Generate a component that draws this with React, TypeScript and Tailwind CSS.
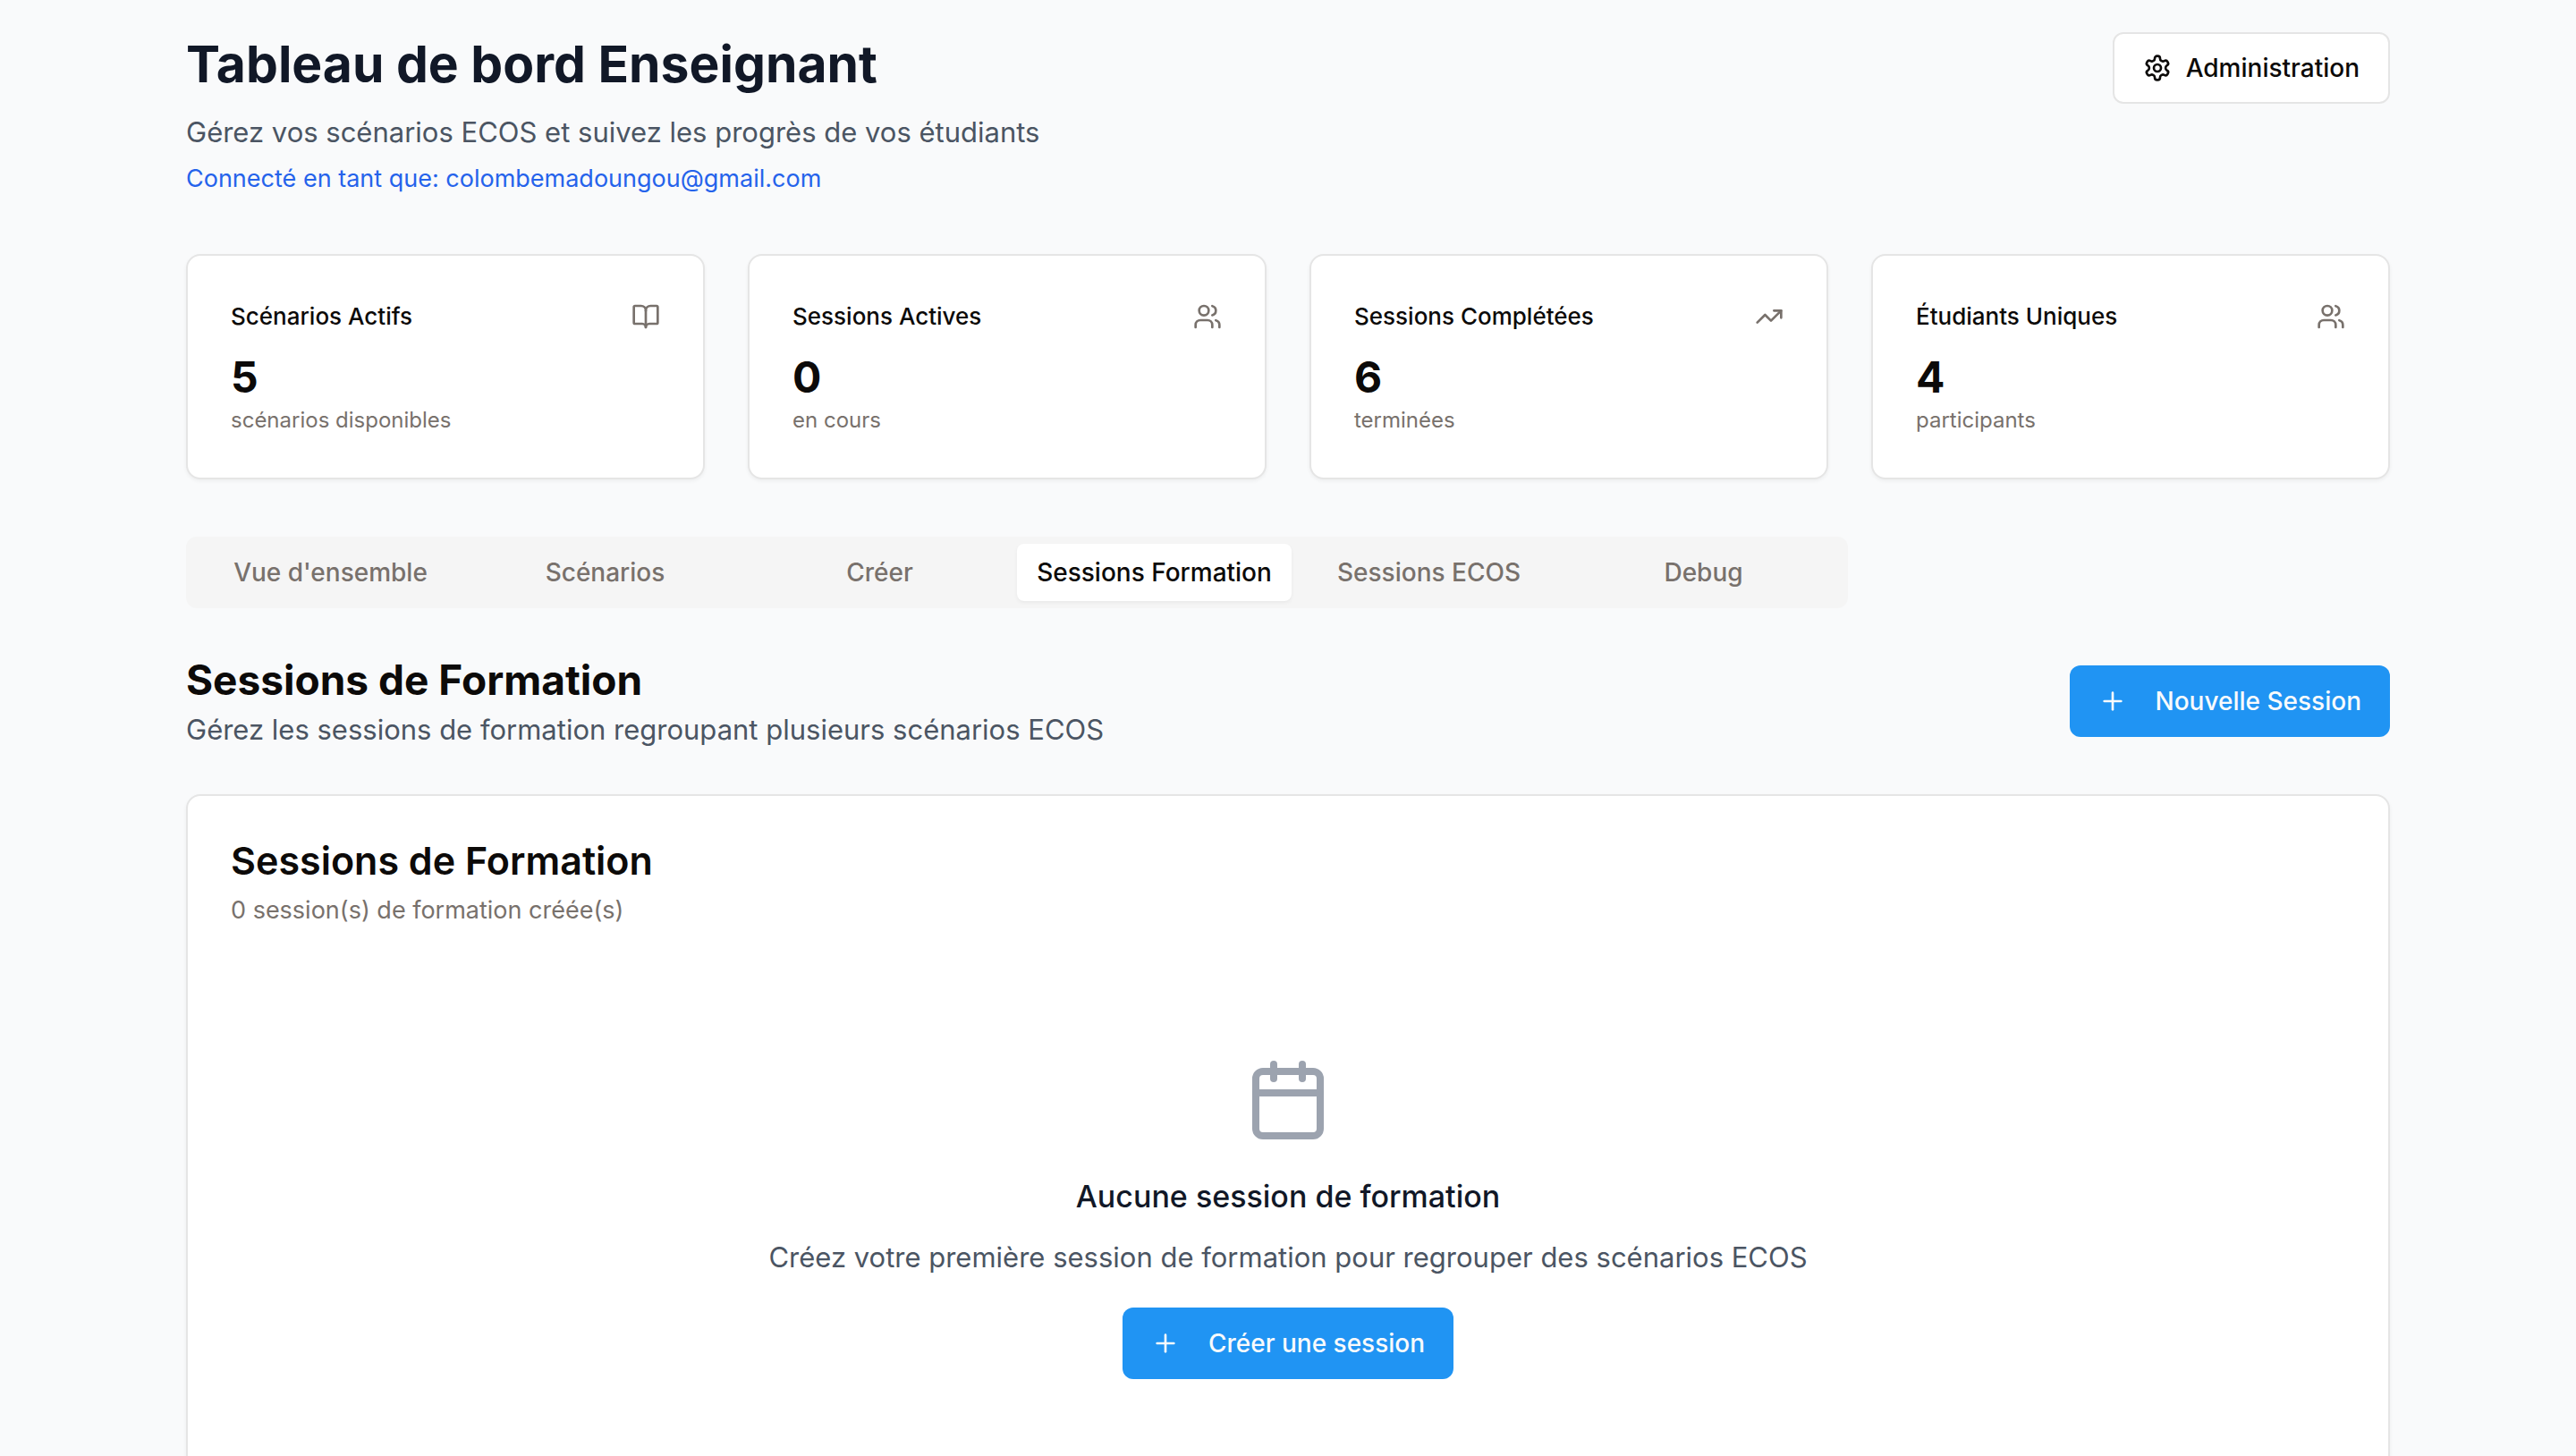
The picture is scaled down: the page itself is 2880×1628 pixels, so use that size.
import { useState } from "react";
import { BookOpen, Calendar, Plus, TrendingUp, Users } from "lucide-react";
import type { LucideIcon } from "lucide-react";

type Stat = { title: string; value: string; caption: string; icon: LucideIcon };

const stats: Stat[] = [
  { title: "Scénarios Actifs", value: "5", caption: "scénarios disponibles", icon: BookOpen },
  { title: "Sessions Actives", value: "0", caption: "en cours", icon: Users },
  { title: "Sessions Complétées", value: "6", caption: "terminées", icon: TrendingUp },
  { title: "Étudiants Uniques", value: "4", caption: "participants", icon: Users },
];

const tabs = ["Vue d'ensemble", "Scénarios", "Créer", "Sessions Formation", "Sessions ECOS", "Debug"];

function GearIcon() {
  return (
    <svg
      className="size-8"
      viewBox="0 0 24 24"
      fill="none"
      stroke="currentColor"
      strokeWidth="2"
      strokeLinecap="round"
      strokeLinejoin="round"
      aria-hidden="true"
    >
      <path d="M12.22 2h-.44a2 2 0 0 0-2 2v.18a2 2 0 0 1-1 1.73l-.43.25a2 2 0 0 1-2 0l-.15-.08a2 2 0 0 0-2.73.73l-.22.38a2 2 0 0 0 .73 2.73l.15.1a2 2 0 0 1 1 1.72v.51a2 2 0 0 1-1 1.74l-.15.09a2 2 0 0 0-.73 2.73l.22.38a2 2 0 0 0 2.73.73l.15-.08a2 2 0 0 1 2 0l.43.25a2 2 0 0 1 1 1.73V20a2 2 0 0 0 2 2h.44a2 2 0 0 0 2-2v-.18a2 2 0 0 1 1-1.73l.43-.25a2 2 0 0 1 2 0l.15.08a2 2 0 0 0 2.73-.73l.22-.39a2 2 0 0 0-.73-2.73l-.15-.08a2 2 0 0 1-1-1.74v-.5a2 2 0 0 1 1-1.74l.15-.09a2 2 0 0 0 .73-2.73l-.22-.38a2 2 0 0 0-2.73-.73l-.15.08a2 2 0 0 1-2 0l-.43-.25a2 2 0 0 1-1-1.73V4a2 2 0 0 0-2-2z" />
      <circle cx="12" cy="12" r="3" />
    </svg>
  );
}

function StatCard({ title, value, caption, icon: Icon }: Stat) {
  return (
    <article className="rounded-2xl border-2 border-[#e5e5e5] bg-white p-12 shadow-[0_2px_4px_rgba(0,0,0,0.05)]">
      <div className="flex items-center justify-between pb-4">
        <h3 className="text-[26px] leading-10 font-medium">{title}</h3>
        <Icon className="size-8 text-[#78716c]" aria-hidden="true" />
      </div>
      <p className="text-[48px] leading-16 font-bold">{value}</p>
      <p className="text-2xl leading-8 text-[#78716c]">{caption}</p>
    </article>
  );
}

function PrimaryButton({ children }: { children: string }) {
  return (
    <button
      type="button"
      className="inline-flex h-20 items-center gap-8 rounded-xl bg-[#2094f3] px-8 text-[28px] leading-10 font-medium whitespace-nowrap text-[#f8fafc]"
    >
      <Plus className="size-8" aria-hidden="true" />
      {children}
    </button>
  );
}

function TabBar() {
  const [active, setActive] = useState("Sessions Formation");
  return (
    <div role="tablist" className="grid w-[1858px] max-w-full grid-cols-6 rounded-xl bg-[#f5f5f5] p-2">
      {tabs.map((tab) => (
        <button
          key={tab}
          type="button"
          role="tab"
          aria-selected={tab === active}
          onClick={() => setActive(tab)}
          className="rounded-lg px-4 py-3 text-[28px] leading-10 font-medium whitespace-nowrap text-[#78716c] aria-selected:bg-white aria-selected:text-[#0c0a09] aria-selected:shadow-[0_2px_4px_rgba(0,0,0,0.05)]"
        >
          {tab}
        </button>
      ))}
    </div>
  );
}

export default function App() {
  return (
    <div className="min-h-screen bg-[#f9fafb] font-['Inter',sans-serif] text-[#0c0a09]">
      <main className="mx-auto max-w-[2560px] px-12 pt-9 pb-16">
        <header className="mb-16 flex items-start justify-between">
          <div>
            <h1 className="mb-4 text-[57px] leading-[72px] font-bold text-[#111827]">Tableau de bord Enseignant</h1>
            <p className="text-[31px] leading-12 text-[#4b5563]">
              Gérez vos scénarios ECOS et suivez les progrès de vos étudiants
            </p>
            <p className="mt-2 text-[27px] leading-10 text-[#2563eb]">
              Connecté en tant que: colombemadoungou@gmail.com
            </p>
          </div>
          <button
            type="button"
            className="inline-flex h-20 items-center gap-4 rounded-xl border-2 border-[#e5e5e5] bg-white px-8 text-[28px] leading-10 font-medium"
          >
            <GearIcon />
            Administration
          </button>
        </header>

        <section className="mb-16 grid grid-cols-4 gap-12" aria-label="Statistiques">
          {stats.map((stat) => (
            <StatCard key={stat.title} {...stat} />
          ))}
        </section>

        <TabBar />

        <div className="mt-12 flex items-center justify-between">
          <div>
            <h2 className="text-[46px] leading-16 font-bold">Sessions de Formation</h2>
            <p className="text-[31px] leading-12 text-[#4b5563]">
              Gérez les sessions de formation regroupant plusieurs scénarios ECOS
            </p>
          </div>
          <PrimaryButton>Nouvelle Session</PrimaryButton>
        </div>

        <section className="mt-12 rounded-2xl border-2 border-[#e5e5e5] bg-white p-12 shadow-[0_2px_4px_rgba(0,0,0,0.05)]">
          <h3 className="text-[43px] leading-12 font-semibold">Sessions de Formation</h3>
          <p className="mt-3 text-[27px] leading-10 text-[#78716c]">0 session(s) de formation créée(s)</p>
          <div className="mt-12 flex flex-col items-center py-24 text-center">
            <Calendar className="size-24 text-[#9ca3af]" aria-hidden="true" />
            <h4 className="mt-8 text-[34px] leading-14 font-medium text-[#111827]">Aucune session de formation</h4>
            <p className="mt-4 mb-8 text-[31px] leading-12 text-[#4b5563]">
              Créez votre première session de formation pour regrouper des scénarios ECOS
            </p>
            <PrimaryButton>Créer une session</PrimaryButton>
          </div>
        </section>
      </main>
    </div>
  );
}
